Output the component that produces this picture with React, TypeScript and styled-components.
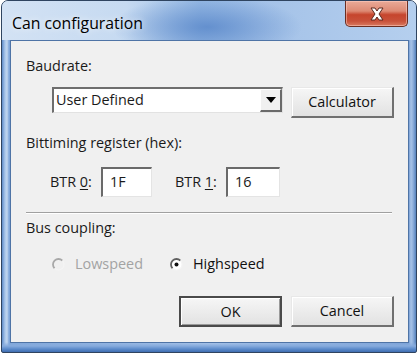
import React from "react";
import styled, { createGlobalStyle } from "styled-components";

const Global = createGlobalStyle`
  html, body { margin: 0; padding: 0; background: #ffffff; }
  body { font-family: "Open Sans", "Noto Sans", sans-serif; }
`;

const Page = styled.div`
  width: 419px;
  height: 354px;
  padding-left: 1px;
  box-sizing: border-box;
`;

const Window = styled.div`
  width: 416px;
  height: 353px;
  box-sizing: border-box;
  border: 1px solid #2f4460;
  border-radius: 7px 7px 2px 2px;
  display: flex;
  flex-direction: column;
  padding: 0 7px 9px 8px;
  background:
    linear-gradient(0deg, #3f6db0 0px, #5c8bcb 3px, #86abdd 6px, rgba(160, 192, 232, 0) 10px),
    linear-gradient(
      90deg,
      #5f8cc8 0px,
      #a9c6ea 3px,
      #c2d7ef 5px,
      #7ea5d9 7px,
      #b2cbec 50%,
      #7aa0d6 calc(100% - 7px),
      #a7c3e7 calc(100% - 5px),
      #8fb0dc calc(100% - 3px),
      #5582be 100%
    );
  box-shadow: inset 0 1px 0 #e9f1fb;
  overflow: hidden;
`;

const TitleBar = styled.div`
  height: 39px;
  flex: none;
  display: flex;
  align-items: flex-start;
  justify-content: space-between;
  margin: 0 -7px 0 -8px;
  padding: 0 8px 0 10px;
  background:
    radial-gradient(ellipse 95px 32px at 205px 26px, rgba(90, 136, 202, 0.85), rgba(90, 136, 202, 0) 100%),
    linear-gradient(90deg, #d3e2f4 0%, #c6daf1 30%, #9bbde6 48%, #a4c2e8 62%, #b5cfee 100%);
`;

const Title = styled.div`
  margin-top: 12px;
  font-family: "Open Sans", "Noto Sans", sans-serif;
  font-size: 15.8px;
  line-height: 20px;
  color: #000;
  text-shadow: 0 0 6px rgba(255, 255, 255, 0.9);
`;

const CloseButton = styled.div`
  width: 63px;
  height: 26px;
  box-sizing: border-box;
  border: 1px solid #6a2e22;
  border-top: none;
  border-radius: 0 0 5px 5px;
  background: linear-gradient(180deg, #e9aa98 0%, #dd8a74 40%, #c6452d 55%, #c8513a 80%, #d97a60 100%);
  box-shadow: inset 0 0 0 1px rgba(255, 210, 200, 0.5);
  display: flex;
  align-items: center;
  justify-content: center;
`;

const Client = styled.div`
  flex: 1;
  background: #f0f0f0;
  border: 1px solid #4f74a6;
  display: flex;
  flex-direction: column;
  padding: 15px 14px 0 15px;
  font-family: "Open Sans", "Noto Sans", sans-serif;
  font-size: 14.4px;
  color: #1a1a1a;
`;

const GroupLabel = styled.div<{ $mt: number }>`
  height: 20px;
  line-height: 20px;
  margin-top: ${(p) => p.$mt}px;
`;

const ComboRow = styled.div`
  margin-top: 11px;
  padding-left: 26px;
  height: 30px;
  display: flex;
  align-items: flex-start;
  gap: 8px;
`;

const Combo = styled.div`
  width: 231px;
  height: 26px;
  box-sizing: border-box;
  background: #fff;
  border-style: solid;
  border-width: 2px 1px 1px 2px;
  border-color: #6e6e6e #e2e2e2 #e2e2e2 #6e6e6e;
  display: flex;
  align-items: stretch;
`;

const ComboText = styled.div`
  flex: 1;
  line-height: 22px;
  padding-left: 2px;
`;

const DropButton = styled.div`
  width: 22px;
  box-sizing: border-box;
  background: #f0f0f0;
  border-style: solid;
  border-width: 1px 2px 2px 1px;
  border-color: #ffffff #6a6a6a #6a6a6a #ffffff;
  display: flex;
  align-items: center;
  justify-content: center;
`;

const Arrow = styled.div`
  width: 0;
  height: 0;
  border-left: 5px solid transparent;
  border-right: 5px solid transparent;
  border-top: 6px solid #000;
`;

const PushButton = styled.div<{ $default?: boolean }>`
  width: 103px;
  height: 31px;
  box-sizing: border-box;
  background: linear-gradient(180deg, #f6f6f6 0%, #ececec 50%, #e2e2e2 100%);
  border-style: solid;
  border-width: ${(p) => (p.$default ? "2px" : "1px 2px 2px 1px")};
  border-color: ${(p) =>
    p.$default ? "#4a4a4a" : "#e8e8e8 #707070 #707070 #e8e8e8"};
  box-shadow: ${(p) =>
    p.$default ? "inset 1px 1px 0 #ffffff, inset -1px -1px 0 #9a9a9a" : "inset 1px 1px 0 #ffffff"};
  display: flex;
  align-items: center;
  justify-content: center;
  line-height: 20px;
  color: #111;
`;

const BtrRow = styled.div`
  margin-top: 14px;
  height: 30px;
  padding-left: 24px;
  display: flex;
  align-items: center;
`;

const BtrLabel = styled.span`
  width: 51px;
  line-height: 20px;
`;

const Under = styled.span`
  text-decoration: underline;
  text-underline-offset: 2px;
`;

const HexInput = styled.div<{ $w: number }>`
  width: ${(p) => p.$w}px;
  height: 30px;
  box-sizing: border-box;
  background: #fff;
  border-style: solid;
  border-width: 2px 1px 1px 2px;
  border-color: #6a6a6a #e4e4e4 #e4e4e4 #6a6a6a;
  padding-left: 7px;
  line-height: 26px;
  margin-right: 23px;
`;

const Separator = styled.div`
  margin-top: 15px;
  margin-right: 2px;
  height: 1px;
  background: #a0a0a0;
  box-shadow: 0 1px 0 #ffffff;
`;

const RadioRow = styled.div`
  margin-top: 16px;
  height: 20px;
  padding-left: 26px;
  display: flex;
  align-items: center;
`;

const RadioItem = styled.div<{ $disabled?: boolean }>`
  width: 118px;
  display: flex;
  align-items: center;
  gap: 10px;
  line-height: 20px;
  color: ${(p) => (p.$disabled ? "#a3a3a3" : "#111")};
`;

const ButtonRow = styled.div`
  margin-top: 22px;
  display: flex;
  justify-content: flex-end;
  gap: 9px;
`;

const Radio = ({ checked, disabled }: { checked?: boolean; disabled?: boolean }) => (
  <svg width="13" height="13" viewBox="0 0 13 13">
    <circle cx="6.5" cy="6.5" r="5.5" fill={disabled ? "#f0f0f0" : "#ffffff"} />
    <path d="M10.4 2.6 A5.5 5.5 0 1 0 2.6 10.4" fill="none" stroke={disabled ? "#a8a8a8" : "#606060"} strokeWidth="1.8" />
    <path d="M2.6 10.4 A5.5 5.5 0 0 0 10.4 2.6" fill="none" stroke="#f4f4f4" strokeWidth="1.2" />
    {checked && <circle cx="6.5" cy="6.5" r="2" fill="#111" />}
  </svg>
);

export default function App() {
  return (
    <>
      <Global />
      <Page>
        <Window>
          <TitleBar>
            <Title>Can configuration</Title>
            <CloseButton>
              <svg width="18" height="16" viewBox="0 0 18 16">
                <path
                  d="M3 2 L7 2 L9 5 L11 2 L15 2 L11 8 L15 14 L11 14 L9 11 L7 14 L3 14 L7 8 Z"
                  fill="#ffffff"
                  stroke="#5a2a20"
                  strokeWidth="1"
                  strokeLinejoin="round"
                />
              </svg>
            </CloseButton>
          </TitleBar>
          <Client>
            <GroupLabel $mt={0}>Baudrate:</GroupLabel>
            <ComboRow>
              <Combo>
                <ComboText>User Defined</ComboText>
                <DropButton>
                  <Arrow />
                </DropButton>
              </Combo>
              <PushButton>Calculator</PushButton>
            </ComboRow>
            <GroupLabel $mt={16}>Bittiming register (hex):</GroupLabel>
            <BtrRow>
              <BtrLabel>
                BTR <Under>0</Under>:
              </BtrLabel>
              <HexInput $w={51}>1F</HexInput>
              <BtrLabel>
                BTR <Under>1</Under>:
              </BtrLabel>
              <HexInput $w={54}>16</HexInput>
            </BtrRow>
            <Separator />
            <GroupLabel $mt={5}>Bus coupling:</GroupLabel>
            <RadioRow>
              <RadioItem $disabled>
                <Radio disabled />
                Lowspeed
              </RadioItem>
              <RadioItem>
                <Radio checked />
                Highspeed
              </RadioItem>
            </RadioRow>
            <ButtonRow>
              <PushButton $default>OK</PushButton>
              <PushButton>Cancel</PushButton>
            </ButtonRow>
          </Client>
        </Window>
      </Page>
    </>
  );
}
